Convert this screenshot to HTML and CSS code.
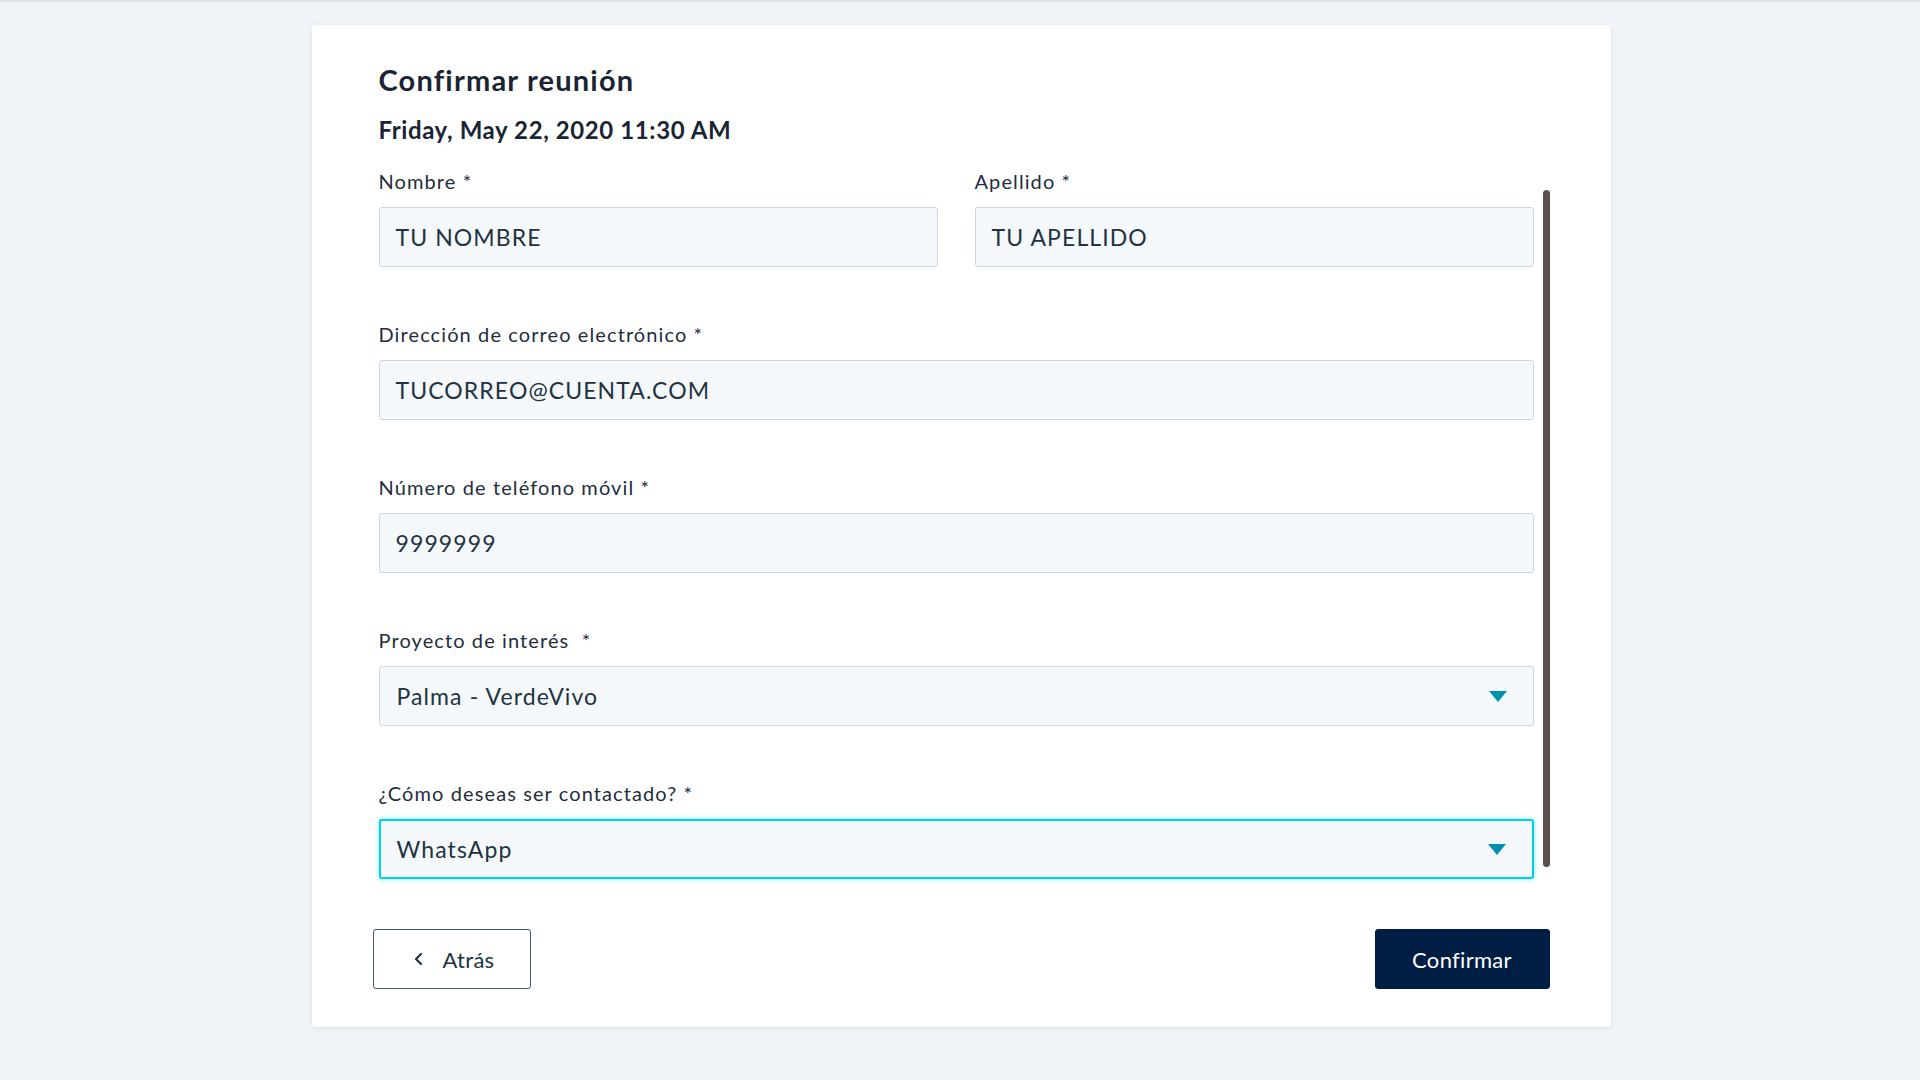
FILE: index.html
```html
<!DOCTYPE html>
<html lang="es">
<head>
<meta charset="utf-8">
<title>Confirmar reunión</title>
<link rel="stylesheet" href="styles.css">
</head>
<body>
<div class="page">
  <div class="card">
    <h1 class="title">Confirmar reunión</h1>
    <div class="date">Friday, May 22, 2020 11:30 AM</div>
    <div class="body">
      <form class="form">
        <div class="row two">
          <div class="field">
            <label class="label">Nombre *</label>
            <div class="input">TU NOMBRE</div>
          </div>
          <div class="field">
            <label class="label">Apellido *</label>
            <div class="input">TU APELLIDO</div>
          </div>
        </div>
        <div class="field">
          <label class="label">Dirección de correo electrónico *</label>
          <div class="input">TUCORREO@CUENTA.COM</div>
        </div>
        <div class="field">
          <label class="label">Número de teléfono móvil *</label>
          <div class="input">9999999</div>
        </div>
        <div class="field">
          <label class="label">Proyecto de interés &nbsp;*</label>
          <div class="input select">
            <span>Palma - VerdeVivo</span>
            <svg class="caret" width="18" height="11" viewBox="0 0 18 11"><path d="M0 0 H18 L9 11 Z" fill="#0091ae"/></svg>
          </div>
        </div>
        <div class="field last">
          <label class="label">¿Cómo deseas ser contactado? *</label>
          <div class="input select focus">
            <span>WhatsApp</span>
            <svg class="caret" width="18" height="11" viewBox="0 0 18 11"><path d="M0 0 H18 L9 11 Z" fill="#0091ae"/></svg>
          </div>
        </div>
      </form>
      <div class="scrollbar"><div class="thumb"></div></div>
    </div>
    <div class="actions">
      <button class="btn back" type="button">
        <svg width="12" height="14" viewBox="0 0 12 14"><path d="M8 2 L3 7 L8 12" fill="none" stroke="#213343" stroke-width="2.2" stroke-linecap="round" stroke-linejoin="round"/></svg>
        <span>Atrás</span>
      </button>
      <button class="btn confirm" type="button">Confirmar</button>
    </div>
  </div>
</div>
</body>
</html>
```
FILE: styles.css
```css
* { box-sizing: border-box; }
html, body { margin: 0; padding: 0; }
body {
  background: #f0f4f8;
  font-family: Lato, "Open Sans", sans-serif;
  color: #1f2d3d;
  height: 1080px;
  overflow: hidden;
  border-top: 2px solid #dbe2ea;
}
.page {
  display: flex;
  justify-content: center;
  padding-top: 23px;
}
.card {
  width: 1299px;
  height: 1002px;
  margin-left: 2px;
  background: #ffffff;
  border-radius: 4px;
  box-shadow: 0 1px 4px rgba(45, 62, 80, 0.10);
  padding: 0 61px 0 67px;
  display: flex;
  flex-direction: column;
}
.title {
  margin: 0;
  font-size: 29px;
  font-weight: 700;
  line-height: 34px;
  margin-top: 38px;
  color: #1a2533;
  letter-spacing: 1.2px;
}
.date {
  font-size: 24px;
  font-weight: 700;
  line-height: 28px;
  margin-top: 19px;
  color: #1a2533;
  letter-spacing: 0.6px;
}
.body {
  display: flex;
  gap: 9px;
  margin-top: 25px;
}
.form {
  width: 1155px;
  display: flex;
  flex-direction: column;
  gap: 55px;
}
.row.two {
  display: flex;
  gap: 37px;
}
.row.two .field { flex: 1; }
.field {
  display: flex;
  flex-direction: column;
  gap: 14px;
}
.label {
  font-size: 20px;
  line-height: 24px;
  color: #1f2d3d;
  letter-spacing: 1.1px;
}
.input {
  height: 60px;
  background: #f5f8fa;
  border: 1px solid #cbd6e2;
  border-radius: 3px;
  padding: 0 16px;
  display: flex;
  align-items: center;
  font-size: 23px;
  letter-spacing: 1.1px;
  color: #213343;
}
.select { padding: 0 18px 0 17px; justify-content: space-between; }
.select .caret { margin-right: 8px; }
.focus {
  border: 2px solid #00d0e4;
  box-shadow: 0 0 4px 1px rgba(0, 208, 228, 0.35);
  padding-left: 16px;
}
.scrollbar {
  width: 7px;
  padding-top: 21px;
  padding-bottom: 12px;
  display: flex;
}
.thumb {
  width: 7px;
  flex: 1;
  background: #5e4f4f;
  border-radius: 4px;
}
.actions {
  display: flex;
  justify-content: space-between;
  margin-top: 50px;
  margin-left: -6px;
}
.btn {
  height: 60px;
  border-radius: 3px;
  font-family: Lato, "Open Sans", sans-serif;
  font-size: 22px;
  letter-spacing: 0.3px;
  display: flex;
  align-items: center;
  justify-content: center;
  cursor: pointer;
}
.back {
  width: 158px;
  background: #ffffff;
  border: 1.5px solid #425b76;
  color: #213343;
  gap: 18px;
  padding: 0 0 0 4px;
}
.confirm {
  width: 175px;
  background: #001e44;
  border: 1px solid #001e44;
  color: #ffffff;
}
```
